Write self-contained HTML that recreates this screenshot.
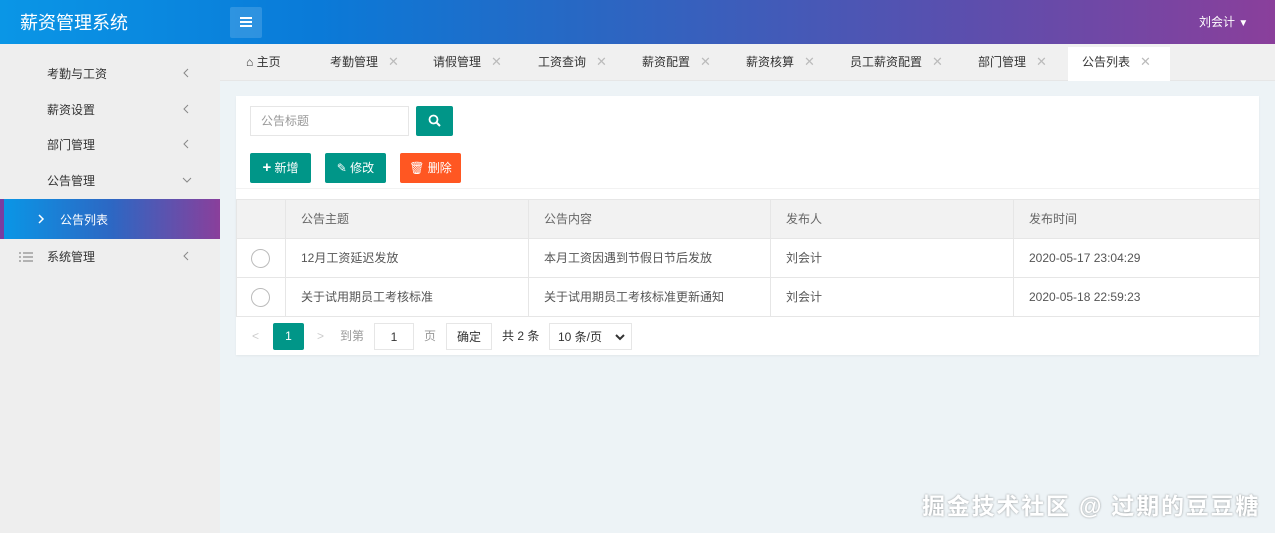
<!DOCTYPE html>
<html><head><meta charset="utf-8"><style>
*{margin:0;padding:0;box-sizing:border-box}
body{width:1275px;height:533px;overflow:hidden;font-family:"Liberation Sans","Noto Sans CJK SC",sans-serif;font-size:12px;color:#333;background:#edf3f6;position:relative}
.hdr{position:absolute;left:0;top:0;width:1275px;height:44px;background:linear-gradient(90deg,#0a96e6 0%,#0a7ad8 25%,#2768c4 45%,#5a4fae 75%,#8a3f9b 100%)}
.logo{position:absolute;left:20px;top:9px;color:#fff;font-size:18px}
.menu{position:absolute;left:230px;top:7px;width:32px;height:31px;background:rgba(255,255,255,.15);border-radius:2px}
.menu i{position:absolute;left:10px;width:12px;height:2px;background:#fff}
.user{position:absolute;left:1199px;top:13px;color:#fff;font-size:12px}
.side{position:absolute;left:0;top:44px;width:220px;height:489px;background:#eeeeee}
.si{position:absolute;left:47px;font-size:12px;color:#333;line-height:16px}
.arr{position:absolute;left:182px;width:10px;height:10px}
.act{position:absolute;left:0;top:199px;width:220px;height:40px;background:linear-gradient(90deg,#0a96e6,#2d67c3 50%,#8a3f9b);border-left:4px solid #7a3ea0}
.tabs{position:absolute;left:220px;top:44px;width:1055px;height:37px;background:#f0f0f0;border-bottom:1px solid #e6e6e6}
.tab{position:absolute;top:10px;font-size:12px;color:#333;line-height:16px}
.tab b{font-weight:normal;color:#bbb;margin-left:10px;font-size:13px}
.card{position:absolute;left:236px;top:96px;width:1023px;height:259px;background:#fff;box-shadow:0 1px 2px rgba(0,0,0,.05)}
.btn{position:absolute;top:153px;height:30px;color:#fff;font-size:12px;line-height:30px;text-align:center;border-radius:2px}
table{position:absolute;left:236px;top:199px;width:1024px;border-collapse:collapse}
td{border:1px solid #e6e6e6;height:39px;padding:0 0 0 15px;color:#555;font-size:12px;vertical-align:middle;line-height:16px}
tr.h td{background:#f2f2f2;color:#666}
.rad{display:block;width:19px;height:19px;border:1px solid #bbb;border-radius:50%;margin-left:-1px}
.pg{position:absolute;top:323px;height:27px;line-height:27px;font-size:12px}
</style></head><body>
<div class="hdr"><div class="logo">薪资管理系统</div>
<div class="menu"><i style="top:10px"></i><i style="top:14px"></i><i style="top:18px"></i></div>
<div class="user">刘会计 <span style="font-size:10px">▼</span></div></div>
<div class="side">
<div class="si" style="top:22px">考勤与工资</div><svg class="arr" style="top:24px" viewBox="0 0 10 10"><path d="M6 1 L2 5 L6 9" fill="none" stroke="#888" stroke-width="1"/></svg>
<div class="si" style="top:58px">薪资设置</div><svg class="arr" style="top:60px" viewBox="0 0 10 10"><path d="M6 1 L2 5 L6 9" fill="none" stroke="#888" stroke-width="1"/></svg>
<div class="si" style="top:93px">部门管理</div><svg class="arr" style="top:95px" viewBox="0 0 10 10"><path d="M6 1 L2 5 L6 9" fill="none" stroke="#888" stroke-width="1"/></svg>
<div class="si" style="top:129px">公告管理</div><svg class="arr" style="top:131px" viewBox="0 0 10 10"><path d="M1 3 L5 7 L9 3" fill="none" stroke="#888" stroke-width="1"/></svg>
<svg style="position:absolute;left:19px;top:208px" width="14" height="10" viewBox="0 0 14 10"><path d="M0 1h2M4 1h10M0 5h2M4 5h10M0 9h2M4 9h10" stroke="#777" stroke-width="1"/></svg>
<div class="si" style="top:205px">系统管理</div><svg class="arr" style="top:207px" viewBox="0 0 10 10"><path d="M6 1 L2 5 L6 9" fill="none" stroke="#888" stroke-width="1"/></svg>
</div>
<div class="act"><svg style="position:absolute;left:33px;top:15px" width="8" height="10" viewBox="0 0 8 10"><path d="M2 1 L6 5 L2 9" fill="none" stroke="#fff" stroke-width="1.5"/></svg><span style="position:absolute;left:56px;top:12px;color:#fff;font-size:12px">公告列表</span></div>
<div class="tabs">
<div class="tab" style="left:26px">⌂ 主页</div>
<div class="tab" style="left:110px">考勤管理<b>✕</b></div>
<div class="tab" style="left:213px">请假管理<b>✕</b></div>
<div class="tab" style="left:318px">工资查询<b>✕</b></div>
<div class="tab" style="left:422px">薪资配置<b>✕</b></div>
<div class="tab" style="left:526px">薪资核算<b>✕</b></div>
<div class="tab" style="left:630px">员工薪资配置<b>✕</b></div>
<div class="tab" style="left:758px">部门管理<b>✕</b></div>
<div style="position:absolute;left:848px;top:3px;width:102px;height:34px;background:#fff"></div>
<div class="tab" style="left:862px">公告列表<b>✕</b></div>
</div>
<div class="card"><div style="position:absolute;left:0;right:0;top:92px;border-top:1px solid #f2f2f2"></div></div>
<div style="position:absolute;left:250px;top:106px;width:159px;height:30px;border:1px solid #e6e6e6;background:#fff;color:#999;padding-left:10px;line-height:28px">公告标题</div>
<div style="position:absolute;left:416px;top:106px;width:37px;height:30px;background:#009688;border-radius:2px"><svg style="position:absolute;left:12px;top:8px" width="14" height="14" viewBox="0 0 14 14"><circle cx="5.5" cy="5.5" r="4" fill="none" stroke="#fff" stroke-width="1.8"/><path d="M8.5 8.5 L12 12" stroke="#fff" stroke-width="2"/></svg></div>
<div class="btn" style="left:250px;width:61px;background:#009688"><b style="font-size:15px">+</b> 新增</div>
<div class="btn" style="left:325px;width:61px;background:#009688">✎ 修改</div>
<div class="btn" style="left:400px;width:61px;background:#ff5722">🗑 删除</div>
<table>
<tr class="h"><td style="width:49px"></td><td style="width:243px">公告主题</td><td style="width:242px">公告内容</td><td style="width:243px">发布人</td><td>发布时间</td></tr>
<tr><td><span class="rad"></span></td><td>12月工资延迟发放</td><td>本月工资因遇到节假日节后发放</td><td>刘会计</td><td>2020-05-17 23:04:29</td></tr>
<tr><td><span class="rad"></span></td><td>关于试用期员工考核标准</td><td>关于试用期员工考核标准更新通知</td><td>刘会计</td><td>2020-05-18 22:59:23</td></tr>
</table>
<div class="pg" style="left:252px;color:#ccc">&lt;</div>
<div class="pg" style="left:273px;width:31px;background:#009688;color:#fff;text-align:center;border-radius:2px">1</div>
<div class="pg" style="left:317px;color:#ccc">&gt;</div>
<div class="pg" style="left:340px;color:#999">到第</div>
<div class="pg" style="left:374px;width:40px;border:1px solid #e6e6e6;text-align:center;background:#fff">1</div>
<div class="pg" style="left:424px;color:#999">页</div>
<div class="pg" style="left:446px;width:46px;border:1px solid #e6e6e6;text-align:center;background:#fff">确定</div>
<div class="pg" style="left:502px">共 2 条</div>
<div class="pg" style="left:549px;width:83px;border:1px solid #e6e6e6;padding-left:8px;background:#fff">10 条/页<svg style="position:absolute;right:6px;top:10px" width="10" height="7" viewBox="0 0 10 7"><path d="M1 1 L5 5 L9 1" fill="none" stroke="#333" stroke-width="2"/></svg></div>
<div style="position:absolute;left:922px;top:487px;color:#fff;font-size:23px;font-weight:bold;letter-spacing:1.8px;white-space:nowrap;text-shadow:0 0 2px rgba(0,0,0,.4)">掘金技术社区 @ 过期的豆豆糖</div>
</body></html>
